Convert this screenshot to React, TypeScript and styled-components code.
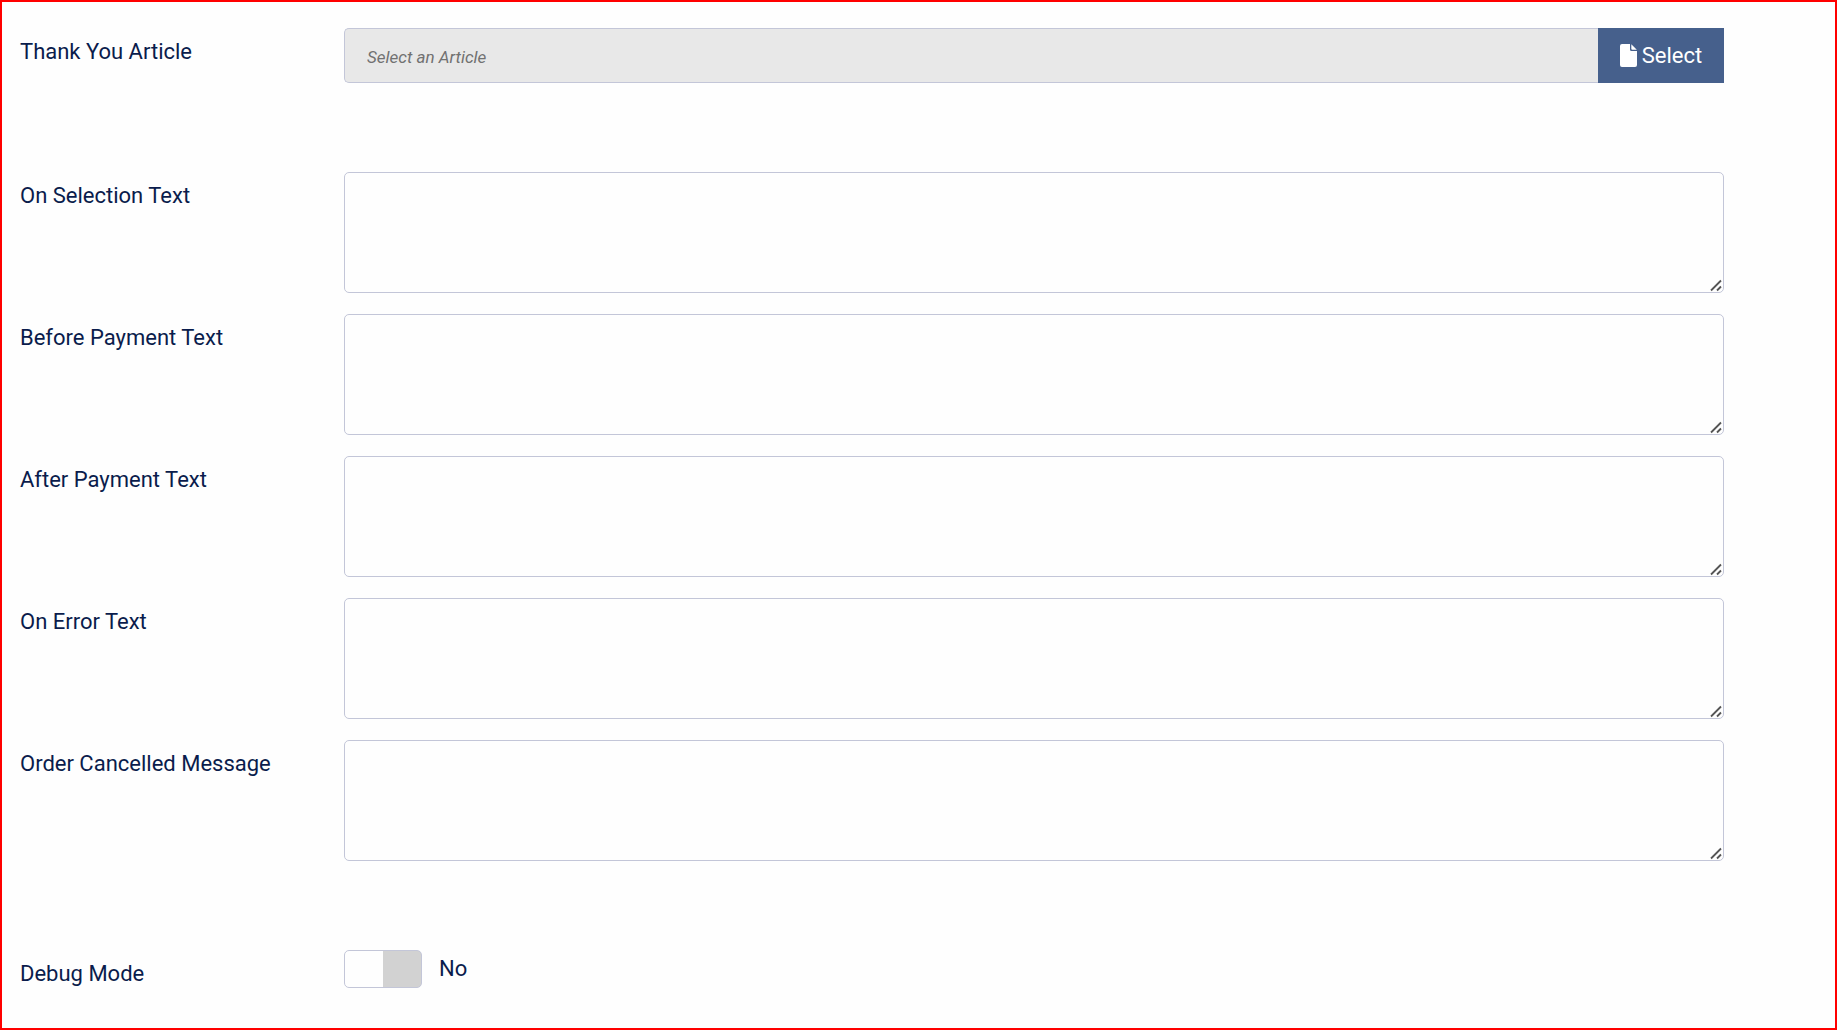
import React, { useState } from 'react';
import styled, { createGlobalStyle } from 'styled-components';

const line = '#c3c6d8';

const GlobalStyle = createGlobalStyle`
  *, *::before, *::after { box-sizing: border-box; }
  body {
    margin: 0;
    background: #fefefe;
    color: #0a1c4c;
    font-family: Roboto, "Liberation Sans", sans-serif;
    font-size: 22px;
    line-height: 32px;
  }
`;

const Panel = styled.form`
  display: flex;
  flex-direction: column;
  gap: 89px;
  min-height: 100vh;
  padding: 26px 111px 26px 18px;
  border: 2px solid #ff0000;
`;

const Group = styled.div`
  display: flex;
  flex-direction: column;
  gap: 21px;
`;

const Row = styled.div`
  display: grid;
  grid-template-columns: 324px minmax(0, 1fr);
  align-items: start;
`;

const Label = styled.label`
  padding-top: 8px;
`;

const InputGroup = styled.div`
  display: flex;
  height: 55px;
`;

const ArticleInput = styled.input`
  flex: 1;
  min-width: 0;
  padding: 3px 22px 0;
  border: 1px solid ${line};
  border-right: 0;
  border-radius: 5px 0 0 5px;
  background: #e8e8e8;
  font: italic 17px Roboto, "Liberation Sans", sans-serif;
  outline: none;

  &::placeholder {
    color: #717171;
    opacity: 1;
  }
`;

const SelectButton = styled.button`
  display: flex;
  align-items: center;
  justify-content: center;
  gap: 5px;
  width: 126px;
  padding: 0;
  border: 0;
  background: #46608c;
  color: #fff;
  font: inherit;
  cursor: pointer;
`;

const AreaWrap = styled.div`
  position: relative;
  display: flex;
`;

const Area = styled.textarea`
  width: 100%;
  height: 121px;
  padding: 11px 22px;
  border: 1px solid ${line};
  border-radius: 5px;
  background: #fefefe;
  color: inherit;
  font: inherit;
  resize: vertical;

  &::-webkit-resizer {
    background: transparent;
  }
`;

const Grip = styled.svg`
  position: absolute;
  right: 1px;
  bottom: 1px;
  pointer-events: none;
`;

const ToggleLine = styled.label`
  display: flex;
  align-items: center;
  gap: 17px;
`;

const Toggle = styled.input`
  appearance: none;
  width: 78px;
  height: 38px;
  margin: 0;
  border: 1px solid ${line};
  border-radius: 5px;
  background: linear-gradient(90deg, #fefefe 50%, #d2d2d2 50%);
  cursor: pointer;

  &:checked {
    background: linear-gradient(90deg, #2f7d32 50%, #fefefe 50%);
  }
`;

const FileIcon = () => (
  <svg width="17" height="24" viewBox="0 0 17 24" fill="#fff" aria-hidden="true">
    <path d="M2 0H10V5.500Q10 7 11.500 7H17V21Q17 23 15 23H2Q0 23 0 21V2Q0 0 2 0Z" />
    <path d="M11.300 0.200L16.800 5.700H12.300Q11.300 5.700 11.300 4.700Z" />
  </svg>
);

const ResizeGrip = () => (
  <Grip width="13" height="13" viewBox="0 0 13 13" stroke="#555" strokeWidth="1.800" aria-hidden="true">
    <path d="M1 11.500L11 1.500M7 11.500L11 7.500" />
  </Grip>
);

const messages = [
  { id: 'selection', label: 'On Selection Text' },
  { id: 'before', label: 'Before Payment Text' },
  { id: 'after', label: 'After Payment Text' },
  { id: 'error', label: 'On Error Text' },
  { id: 'cancelled', label: 'Order Cancelled Message' },
];

export default function App() {
  const [debug, setDebug] = useState(false);

  return (
    <>
      <GlobalStyle />
      <Panel>
        <Row>
          <Label htmlFor="article">Thank You Article</Label>
          <InputGroup>
            <ArticleInput id="article" type="text" placeholder="Select an Article" readOnly />
            <SelectButton type="button">
              <FileIcon />
              Select
            </SelectButton>
          </InputGroup>
        </Row>
        <Group>
          {messages.map((message) => (
            <Row key={message.id}>
              <Label htmlFor={message.id}>{message.label}</Label>
              <AreaWrap>
                <Area id={message.id} />
                <ResizeGrip />
              </AreaWrap>
            </Row>
          ))}
        </Group>
        <Row>
          <Label htmlFor="debug">Debug Mode</Label>
          <ToggleLine>
            <Toggle
              id="debug"
              type="checkbox"
              checked={debug}
              onChange={(event) => setDebug(event.target.checked)}
            />
            {debug ? 'Yes' : 'No'}
          </ToggleLine>
        </Row>
      </Panel>
    </>
  );
}
